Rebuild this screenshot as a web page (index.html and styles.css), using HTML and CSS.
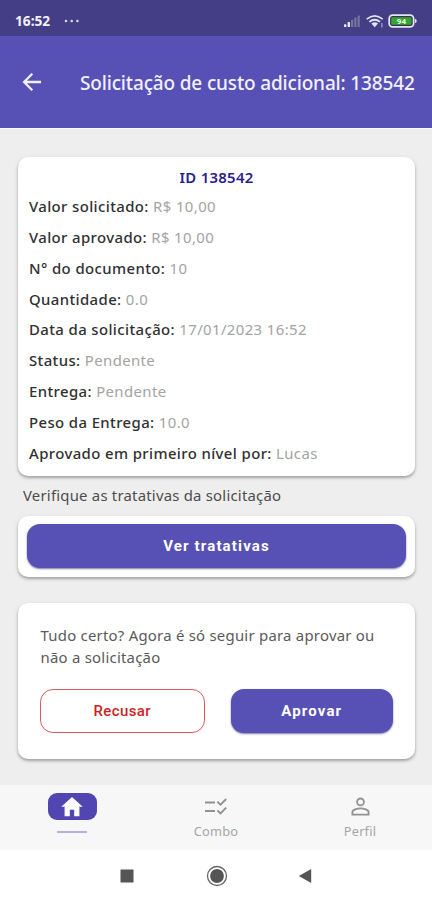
FILE: index.html
```html
<!DOCTYPE html>
<html lang="pt-BR">
<head>
<meta charset="utf-8">
<meta name="viewport" content="width=device-width, initial-scale=1">
<title>Solicitação de custo adicional</title>
<link rel="stylesheet" href="styles.css">
</head>
<body>
<div class="status">
  <span class="clock">16:52</span>
  <svg class="dots" width="16" height="4" viewBox="0 0 16 4" fill="#d9d8f0"><circle cx="2" cy="2" r="1.3"/><circle cx="7.7" cy="2" r="1.3"/><circle cx="13.4" cy="2" r="1.3"/></svg>
  <svg class="indicators" width="76" height="16" viewBox="0 0 76 16">
    <g fill="#e6e6f8"><rect x="2" y="11.3" width="2.4" height="2.7" rx=".5"/><rect x="5.6" y="9" width="2.4" height="5" rx=".5"/></g>
    <g fill="#77739f"><rect x="9" y="6.8" width="2.2" height="7.2" rx=".5"/><rect x="12.3" y="4.6" width="2.2" height="9.4" rx=".5"/><rect x="15.6" y="2.5" width="2.2" height="11.5" rx=".5"/></g>
    <g fill="none" stroke="#e3e2f7" stroke-width="1.7"><path d="M24.7 6.2q8-6.6 16 0"/><path d="M27.3 8.9q5.4-4.3 10.8 0"/></g>
    <path d="M29.4 10.5q3.3-2.4 6.6 0l-3.3 3.7z" fill="#e3e2f7"/>
    <path d="M39.9 10v4.5" stroke="#a9a6d4" stroke-width="1.2"/>
    <rect x="47.2" y="2.2" width="24.4" height="11.6" rx="3.4" fill="#36315f" stroke="#e3e5ef" stroke-width="1.8"/>
    <rect x="49.3" y="4.2" width="20.2" height="7.6" rx="1" fill="#35a52b"/>
    <path d="M73 6q1.7 0 1.7 2T73 10z" fill="#e3e5ef"/>
    <text class="charge" x="59.4" y="11" text-anchor="middle">94</text>
  </svg>
</div>
<header class="appbar">
  <svg class="back" width="20" height="20" viewBox="0 0 20 20" fill="none" stroke="#f1f0ff" stroke-width="2.3"><path d="M19 10H2.5M10.3 1.8L2.1 10l8.2 8.2"/></svg>
  <h1 class="title">Solicitação de custo adicional: 138542</h1>
</header>
<main class="content">
  <section class="card details">
    <h2 class="ident">ID 138542</h2>
    <div class="row"><b>Valor solicitado:</b> R$ 10,00</div>
    <div class="row"><b>Valor aprovado:</b> R$ 10,00</div>
    <div class="row"><b>N° do documento:</b> 10</div>
    <div class="row"><b>Quantidade:</b> 0.0</div>
    <div class="row"><b>Data da solicitação:</b> 17/01/2023 16:52</div>
    <div class="row"><b>Status:</b> Pendente</div>
    <div class="row"><b>Entrega:</b> Pendente</div>
    <div class="row"><b>Peso da Entrega:</b> 10.0</div>
    <div class="row"><b>Aprovado em primeiro nível por:</b> Lucas</div>
  </section>
  <p class="hint">Verifique as tratativas da solicitação</p>
  <section class="card single"><button class="btn wide">Ver tratativas</button></section>
  <section class="card decision">
    <p class="question">Tudo certo? Agora é só seguir para aprovar ou<br>não a solicitação</p>
    <div class="actions"><button class="btn refuse">Recusar</button><button class="btn">Aprovar</button></div>
  </section>
</main>
<nav class="tabs">
  <a class="tab"><span class="pill"><svg width="22" height="20" viewBox="0 0 22 20" fill="#fff"><path d="M11 0L.3 9.7h3.3v9.5h5.2v-6.5h4.4v6.5h5.2V9.7h3.3z"/></svg></span><span class="underline"></span></a>
  <a class="tab"><svg width="24" height="20" viewBox="0 0 24 20" fill="none" stroke="#929292" stroke-width="1.9"><path d="M1 5.5h10M1 14h10M13.4 4.6l3.1 3.1L22.2 2M13.4 13.3l3.1 3.1 5.7-5.7"/></svg><span>Combo</span></a>
  <a class="tab"><svg width="20" height="20" viewBox="0 0 20 20" fill="none" stroke="#929292" stroke-width="1.8"><circle cx="10.5" cy="4.9" r="3.4"/><path d="M2.4 17.6v-2.4c0-2.5 4.8-3.9 8.1-3.9s8.1 1.4 8.1 3.9v2.4z"/></svg><span>Perfil</span></a>
</nav>
<footer class="system">
  <svg width="14" height="14" viewBox="0 0 14 14"><rect x=".5" y=".5" width="13" height="13" fill="#555"/></svg>
  <svg width="22" height="22" viewBox="0 0 22 22"><circle cx="11" cy="11" r="9.5" fill="none" stroke="#666" stroke-width="1.3"/><circle cx="11" cy="11" r="6.9" fill="#555"/></svg>
  <svg width="14" height="16" viewBox="0 0 14 16"><path d="M.8 8L13.2 1v14z" fill="#555"/></svg>
</footer>
</body>
</html>
```
FILE: styles.css
```css
* { box-sizing: border-box; }
body { margin: 0; width: 432px; height: 900px; overflow: hidden; display: flex; flex-direction: column; background: #eee; font-family: "Noto Sans", sans-serif; }
h1, h2, p { margin: 0; }
.status { height: 36px; flex: none; display: flex; align-items: center; padding: 5px 14px 0 15px; background: #433e86; color: #f1f0ff; }
.clock { font: 700 13.7px/16px "Noto Sans", sans-serif; letter-spacing: 0; }
.dots { margin-left: 14px; }
.indicators { margin-left: auto; }
.charge { font: 700 8px Roboto, sans-serif; fill: #e8ffe5; }
.appbar { height: 93px; flex: none; display: flex; align-items: center; padding: 0 0 1px 22px; background: #5851b5; border-bottom: 1px solid #fafafc; color: #f1f0ff; }
.title { margin: 2px 0 0 38px; font-size: 19px; font-weight: 500; line-height: 26px; letter-spacing: -.16px; white-space: nowrap; }
.content { flex: 1; padding: 28px 17px 0 18px; }
.card { background: #fff; border-radius: 10px; box-shadow: 0 2px 3px rgba(0,0,0,.28), 0 1px 5px rgba(0,0,0,.08); }
.details { height: 319px; padding: 10px 11px 0; }
.ident { font-size: 14.9px; font-weight: 600; line-height: 20px; height: 24.2px; text-align: center; color: #291d91; letter-spacing: .3px; }
.row { height: 30.8px; line-height: 30.8px; font-size: 14.9px; letter-spacing: .4px; color: #a3a3a3; white-space: nowrap; }
.row b { font-weight: 500; color: #303030; }
.hint { height: 40px; padding: 0 0 0 5px; line-height: 39px; font-size: 14.9px; color: #4c4c4c; letter-spacing: .22px; white-space: nowrap; }
.single { height: 61px; padding: 8px 9px; }
.btn { flex: 1; height: 44px; border: 0; border-radius: 13px; background: #5851b5; color: #fff; font: 700 15px Roboto, sans-serif; letter-spacing: 1.15px; box-shadow: 0 1px 2px rgba(40,35,100,.6); }
.wide { width: 100%; }
.decision { margin-top: 26px; height: 156px; padding: 22px 22px 0; }
.question { line-height: 21.5px; font-size: 14.9px; color: #5a5a5a; letter-spacing: .25px; white-space: nowrap; padding-left: .5px; }
.actions { display: flex; gap: 26px; margin-top: 21px; }
.refuse { background: #fff; border: 1px solid #d85a60; color: #ce1f27; font-weight: 500; letter-spacing: .4px; box-shadow: none; }
.tabs { height: 65px; flex: none; display: grid; grid-template-columns: repeat(3, 1fr); background: #f7f7f7; }
.tab { display: flex; flex-direction: column; align-items: center; padding-top: 12px; font-size: 12.8px; line-height: 17px; color: #a6a6a6; letter-spacing: .2px; }
.tab > span:last-child:not(.underline) { margin-top: 6px; }
.pill { width: 49px; height: 27px; margin-top: -4px; display: flex; align-items: center; justify-content: center; border-radius: 9px; background: #5045b1; }
.underline { width: 30px; height: 2px; margin-top: 11px; background: #b3b0dc; }
.system { height: 50px; flex: none; display: flex; align-items: center; background: #fff; padding: 1px 0 0 120px; }
.system svg:nth-child(2) { margin-left: 72px; }
.system svg:nth-child(3) { margin-left: 70px; }
```
